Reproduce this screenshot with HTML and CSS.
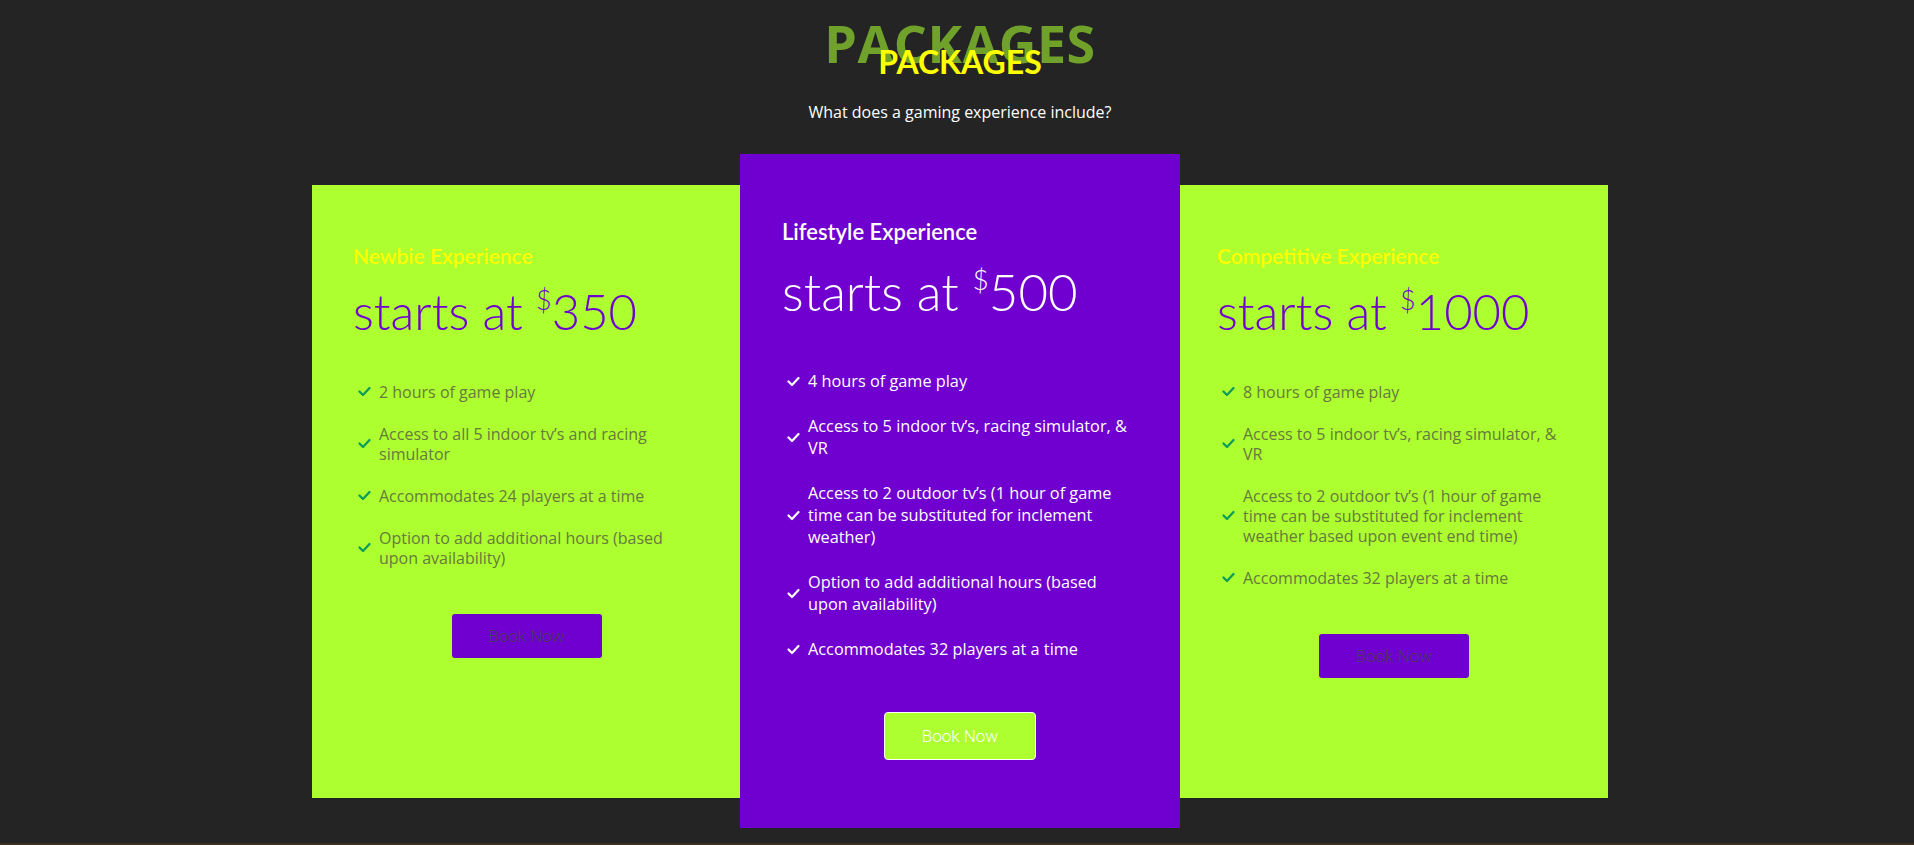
FILE: index.html
```html
<!DOCTYPE html>
<html lang="en">
<head>
<meta charset="utf-8">
<title>Packages</title>
<link rel="stylesheet" href="styles.css">
</head>
<body>
<div class="page">
  <header class="intro">
    <div class="title-wrap">
      <h2 class="title-back">PACKAGES</h2>
      <h3 class="title-front">PACKAGES</h3>
    </div>
    <p class="subtitle">What does a gaming experience include?</p>
  </header>

  <section class="cards">
    <article class="card card-side card-left">
      <h4 class="card-name">Newbie Experience</h4>
      <div class="price">starts at <sup>$</sup>350</div>
      <ul class="features">
        <li><svg class="check" viewBox="0 0 13 11"><path d="M1.5 5.5 L5 9 L11.5 2"/></svg><span>2 hours of game play</span></li>
        <li><svg class="check" viewBox="0 0 13 11"><path d="M1.5 5.5 L5 9 L11.5 2"/></svg><span>Access to all 5 indoor tv’s and racing simulator</span></li>
        <li><svg class="check" viewBox="0 0 13 11"><path d="M1.5 5.5 L5 9 L11.5 2"/></svg><span>Accommodates 24 players at a time</span></li>
        <li><svg class="check" viewBox="0 0 13 11"><path d="M1.5 5.5 L5 9 L11.5 2"/></svg><span>Option to add additional hours (based upon availability)</span></li>
      </ul>
      <div class="btn-row"><a class="btn btn-purple" href="#">Book Now</a></div>
    </article>

    <article class="card card-mid">
      <h4 class="card-name">Lifestyle Experience</h4>
      <div class="price">starts at <sup>$</sup>500</div>
      <ul class="features">
        <li><svg class="check" viewBox="0 0 13 11"><path d="M1.5 5.5 L5 9 L11.5 2"/></svg><span>4 hours of game play</span></li>
        <li><svg class="check" viewBox="0 0 13 11"><path d="M1.5 5.5 L5 9 L11.5 2"/></svg><span>Access to 5 indoor tv’s, racing simulator, &amp; VR</span></li>
        <li><svg class="check" viewBox="0 0 13 11"><path d="M1.5 5.5 L5 9 L11.5 2"/></svg><span>Access to 2 outdoor tv’s (1 hour of game time can be substituted for inclement weather)</span></li>
        <li><svg class="check" viewBox="0 0 13 11"><path d="M1.5 5.5 L5 9 L11.5 2"/></svg><span>Option to add additional hours (based upon availability)</span></li>
        <li><svg class="check" viewBox="0 0 13 11"><path d="M1.5 5.5 L5 9 L11.5 2"/></svg><span>Accommodates 32 players at a time</span></li>
      </ul>
      <div class="btn-row"><a class="btn btn-lime" href="#">Book Now</a></div>
    </article>

    <article class="card card-side card-right">
      <h4 class="card-name">Competitive Experience</h4>
      <div class="price">starts at <sup>$</sup>1000</div>
      <ul class="features">
        <li><svg class="check" viewBox="0 0 13 11"><path d="M1.5 5.5 L5 9 L11.5 2"/></svg><span>8 hours of game play</span></li>
        <li><svg class="check" viewBox="0 0 13 11"><path d="M1.5 5.5 L5 9 L11.5 2"/></svg><span>Access to 5 indoor tv’s, racing simulator, &amp; VR</span></li>
        <li><svg class="check" viewBox="0 0 13 11"><path d="M1.5 5.5 L5 9 L11.5 2"/></svg><span>Access to 2 outdoor tv’s (1 hour of game time can be substituted for inclement weather based upon event end time)</span></li>
        <li><svg class="check" viewBox="0 0 13 11"><path d="M1.5 5.5 L5 9 L11.5 2"/></svg><span>Accommodates 32 players at a time</span></li>
      </ul>
      <div class="btn-row"><a class="btn btn-purple" href="#">Book Now</a></div>
    </article>
  </section>
  <div class="next-section"></div>
</div>
</body>
</html>
```

FILE: styles.css
```css
html, body {
  margin: 0;
  padding: 0;
  background: #242424;
  overflow: hidden;
}

.page {
  width: 1920px;
  font-family: "Open Sans", "Liberation Sans", sans-serif;
}

.intro {
  text-align: center;
}

.title-wrap {
  position: relative;
  padding-top: 17px;
}

.title-back {
  margin: 0;
  font-family: "Open Sans", sans-serif;
  font-weight: 700;
  font-size: 52px;
  line-height: 52px;
  color: #6fa12b;
  letter-spacing: 0.5px;
}

.title-front {
  position: absolute;
  left: 0;
  right: 0;
  top: 46px;
  margin: 0;
  font-family: "Lato", sans-serif;
  font-weight: 700;
  font-size: 32px;
  line-height: 32px;
  color: #ffff00;
}

.subtitle {
  margin: 33px 0 0;
  font-size: 16px;
  line-height: 20px;
  color: #ffffff;
}

.cards {
  display: flex;
  justify-content: center;
  align-items: center;
  margin-top: 32px;
}

.card {
  box-sizing: border-box;
  display: flex;
  flex-direction: column;
}

.card-side {
  width: 428px;
  height: 613px;
  background: #adff2f;
  padding: 59px 40px 0 41px;
}

.card-right {
  padding-left: 37px;
  padding-right: 37px;
}

.card-mid {
  width: 440px;
  height: 674px;
  background: #6f00cf;
  padding: 66px 42px 0 42px;
}

.card-name {
  margin: 0;
  font-family: "Lato", sans-serif;
  font-weight: 600;
  font-size: 21px;
  line-height: 24px;
}

.card-side .card-name {
  color: #ffff00;
}

.card-mid .card-name {
  color: #ffffff;
  font-size: 22px;
}

.price {
  font-family: "Lato", sans-serif;
  font-weight: 300;
  white-space: nowrap;
}

.price sup {
  font-size: 0.55em;
  line-height: 0;
  vertical-align: 0.75em;
}

.card-side .price {
  margin-top: 15px;
  font-size: 49px;
  line-height: 56px;
  color: #7000d0;
}

.card-mid .price {
  margin-top: 18px;
  font-size: 51px;
  line-height: 60px;
  color: #ffffff;
}

.features {
  list-style: none;
  margin: 0;
  padding: 0 0 0 5px;
}

.features li {
  display: flex;
  align-items: center;
  gap: 8px;
}

.check {
  flex: 0 0 13px;
  width: 13px;
  height: 11px;
  fill: none;
  stroke-width: 2.2;
  stroke-linecap: round;
  stroke-linejoin: round;
}

.card-side .features {
  margin-top: 43px;
  font-size: 16px;
  line-height: 20px;
  color: #667a3c;
}

.card-side .features li {
  margin-bottom: 22px;
}

.card-side .check {
  stroke: #0a9a5a;
}

.card-mid .features {
  margin-top: 48px;
  font-size: 16.3px;
  line-height: 22px;
  color: #ffffff;
}

.card-mid .features li {
  margin-bottom: 23px;
}

.card-mid .check {
  stroke: #ffffff;
}

.btn-row {
  display: flex;
  justify-content: center;
}

.btn {
  box-sizing: border-box;
  display: flex;
  align-items: center;
  justify-content: center;
  font-family: "Roboto", sans-serif;
  font-weight: 300;
  font-size: 17px;
  text-decoration: none;
  border-radius: 3px;
}

.btn-purple {
  margin-top: 24px;
  width: 150px;
  height: 44px;
  background: #6f00cf;
  color: #4a3a5a;
}

.btn-lime {
  margin-top: 29px;
  width: 152px;
  height: 48px;
  background: #adff2f;
  color: #ffffff;
  border: 1px solid #ffffff;
  border-radius: 4px;
}

.next-section {
  margin-top: 15px;
  height: 2px;
  background: #3a2f20;
}
```
